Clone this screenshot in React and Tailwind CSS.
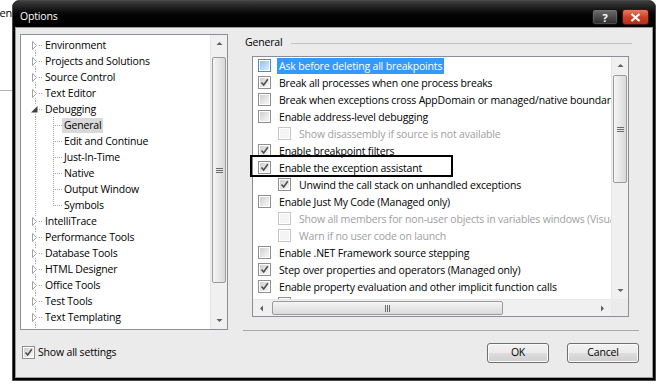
import React from "react";

const treeItems = [
  { t: "Environment", first: true },
  { t: "Projects and Solutions" },
  { t: "Source Control" },
  { t: "Text Editor" },
  { t: "Debugging", open: true },
  { t: "General", child: true, sel: true },
  { t: "Edit and Continue", child: true },
  { t: "Just-In-Time", child: true },
  { t: "Native", child: true },
  { t: "Output Window", child: true },
  { t: "Symbols", child: true, last: true },
  { t: "IntelliTrace" },
  { t: "Performance Tools" },
  { t: "Database Tools" },
  { t: "HTML Designer" },
  { t: "Office Tools" },
  { t: "Test Tools" },
  { t: "Text Templating" },
  { t: "Windows Forms Designer" },
];

const rows = [
  { t: "Ask before deleting all breakpoints", sel: true },
  { t: "Break all processes when one process breaks", c: true },
  { t: "Break when exceptions cross AppDomain or managed/native boundaries" },
  { t: "Enable address-level debugging" },
  { t: "Show disassembly if source is not available", sub: true, dis: true },
  { t: "Enable breakpoint filters", c: true },
  { t: "Enable the exception assistant", c: true },
  { t: "Unwind the call stack on unhandled exceptions", c: true, sub: true },
  { t: "Enable Just My Code (Managed only)" },
  { t: "Show all members for non-user objects in variables windows (Visual Basic only)", sub: true, dis: true },
  { t: "Warn if no user code on launch", sub: true, dis: true },
  { t: "Enable .NET Framework source stepping" },
  { t: "Step over properties and operators (Managed only)", c: true },
  { t: "Enable property evaluation and other implicit function calls", c: true },
  { t: "Call string-conversion function on objects in variables windows", c: true, sub: true },
];

const dot = { stroke: "#a5a5a5", strokeDasharray: "1 1", shapeRendering: "crispEdges" };

function Gutter({ item }) {
  if (item.child) {
    return (
      <svg width="41" height="16" className="shrink-0">
        <line x1="14.5" y1="0" x2="14.5" y2="16" {...dot} />
        <line x1="32.5" y1="0" x2="32.5" y2={item.last ? 9 : 16} {...dot} />
        <line x1="34" y1="8.5" x2="41" y2="8.5" {...dot} />
      </svg>
    );
  }
  return (
    <svg width="22" height="16" className="shrink-0">
      {!item.first && <line x1="14.5" y1="0" x2="14.5" y2="3" {...dot} />}
      <line x1="14.5" y1="13" x2="14.5" y2="16" {...dot} />
      <line x1="18" y1="8.5" x2="22" y2="8.5" {...dot} />
      {item.open ? (
        <polygon points="16.5,5 16.5,11.5 10,11.5" fill="#3f3f3f" />
      ) : (
        <polygon points="11.5,4.5 15.5,8.5 11.5,12.5" fill="#fff" stroke="#a2a2a2" strokeWidth="1" />
      )}
    </svg>
  );
}

function Check({ checked, disabled, hot }) {
  const outer = disabled
    ? "border-[#c6c6c6]"
    : hot
    ? "border-[#4a8ac9]"
    : "border-[#8e8f8f]";
  const inner = disabled
    ? "bg-[#f4f4f4]"
    : hot
    ? "bg-gradient-to-br from-[#93c1ec] to-[#d9ecfb]"
    : "bg-gradient-to-br from-[#cfcfcf] to-[#f8f8f8]";
  return (
    <span className={`w-[13px] h-[13px] shrink-0 border bg-white p-px flex ${outer}`}>
      <span className={`flex-1 flex items-center justify-center ${inner}`}>
        {checked && (
          <svg width="9" height="9" viewBox="0 0 9 9">
            <path d="M1.5 4.5 L3.7 7 L7.8 1.3" stroke={disabled ? "#a0a0a0" : "#4b4b4b"} strokeWidth="1.5" fill="none" />
          </svg>
        )}
      </span>
    </span>
  );
}

function Arrow({ dir }) {
  const pts = {
    up: "0.5,4 3.5,1 6.5,4",
    down: "0.5,1 3.5,4 6.5,1",
    left: "4,0.5 1,3.5 4,6.5",
    right: "1,0.5 4,3.5 1,6.5",
  }[dir];
  const vert = dir === "up" || dir === "down";
  return (
    <svg width={vert ? 7 : 5} height={vert ? 5 : 7}>
      <polygon points={pts} fill="#5f5f5f" />
    </svg>
  );
}

function VScroll({ thumbTop, thumbH }) {
  return (
    <div className="w-[17px] shrink-0 flex flex-col bg-[#f0f0f0] border-l border-[#e6e6e6]">
      <div className="h-[17px] flex items-center justify-center">
        <Arrow dir="up" />
      </div>
      <div style={{ height: thumbTop - 17 }} />
      <div
        className="mx-px rounded-[2px] border border-[#9b9b9b] bg-gradient-to-r from-[#f5f5f5] to-[#d9d9d9] flex items-center justify-center"
        style={{ height: thumbH }}
      >
        <svg width="7" height="7">
          <path d="M0 1.5H7M0 3.5H7M0 5.5H7" stroke="#6b6b6b" strokeWidth="1" />
        </svg>
      </div>
      <div className="flex-1" />
      <div className="h-[17px] flex items-center justify-center">
        <Arrow dir="down" />
      </div>
    </div>
  );
}

function HScroll({ thumbLeft, thumbW }) {
  return (
    <div className="flex-1 h-[17px] flex bg-[#f0f0f0] border-t border-[#e6e6e6]">
      <div className="w-[17px] flex items-center justify-center">
        <Arrow dir="left" />
      </div>
      <div style={{ width: thumbLeft - 17 }} />
      <div
        className="my-px rounded-[2px] border border-[#9b9b9b] bg-gradient-to-b from-[#f5f5f5] to-[#d9d9d9] flex items-center justify-center"
        style={{ width: thumbW }}
      >
        <svg width="7" height="7">
          <path d="M1.5 0V7M3.5 0V7M5.5 0V7" stroke="#6b6b6b" strokeWidth="1" />
        </svg>
      </div>
      <div className="flex-1" />
      <div className="w-[17px] flex items-center justify-center">
        <Arrow dir="right" />
      </div>
    </div>
  );
}

function Button({ children, w }) {
  return (
    <button
      className={`${w} h-[20px] rounded-[3px] border border-[#707070] bg-[linear-gradient(#f2f2f2,#ebebeb_50%,#dddddd_50%,#cfcfcf)] shadow-[inset_0_0_0_1px_#fbfbfb] text-black flex items-center justify-center`}
    >
      {children}
    </button>
  );
}

export default function App() {
  return (
    <div className="w-[658px] h-[389px] bg-white flex font-['Open_Sans',sans-serif] text-[10.5px] tracking-[-0.18px] text-black overflow-hidden">
      <div className="w-[12px] shrink-0 flex flex-col">
        <div className="h-[26px] flex justify-end items-center overflow-hidden text-[11px]">
          <span className="whitespace-nowrap">en</span>
        </div>
        <div className="mt-[64px] h-px bg-[#b4b4b4]" />
      </div>

      <div className="w-[644px] h-[381px] shrink-0 flex flex-col rounded-t-[7px] bg-black border border-[#4a4a4a]">
        {/* title bar */}
        <div className="h-[26px] shrink-0 rounded-t-[6px] bg-gradient-to-b from-[#3e3e3e] via-[#060606] to-black flex items-start pl-[7px] pr-[6px]">
          <span className="mt-[8px] text-white">Options</span>
          <div className="ml-auto mt-[8px] flex gap-[4px]">
            <div className="w-[26px] h-[16px] rounded-[3px] border border-[#111] bg-gradient-to-b from-[#6e6e6e] to-[#2c2c2c] shadow-[inset_0_0_0_1px_#8a8a8a55] flex items-center justify-center text-[11px] font-bold text-white leading-none">
              ?
            </div>
            <div className="w-[27px] h-[16px] rounded-[3px] border border-[#4a1208] bg-gradient-to-b from-[#e67a63] via-[#cc4126] to-[#b3301a] flex items-center justify-center">
              <svg width="11" height="9" viewBox="0 0 11 9">
                <path d="M1.5 1 L9.5 8 M9.5 1 L1.5 8" stroke="#fff" strokeWidth="2.2" />
              </svg>
            </div>
          </div>
        </div>

        {/* body */}
        <div className="flex-1 mx-[2px] mb-[2px] border border-[#9a9a9a] bg-[#ebebeb] flex">
          {/* left column */}
          <div className="ml-[4px] pt-[6px] w-[208px] shrink-0 flex flex-col">
            <div className="h-[296px] border border-[#8a8f96] bg-white flex">
              <div className="flex-1 pt-[2px] overflow-hidden">
                {treeItems.map((item) => (
                  <div key={item.t} className="h-[16px] flex items-center">
                    <Gutter item={item} />
                    <span
                      className={`h-[15px] px-[2px] pt-[2px] flex items-center whitespace-nowrap ${item.sel ? "bg-[#d9d9d9]" : ""}`}
                    >
                      {item.t}
                    </span>
                  </div>
                ))}
              </div>
              <VScroll thumbTop={22} thumbH={226} />
            </div>
            <div className="mt-[15px] ml-[2px] flex items-center gap-[3px]">
              <Check checked />
              <span className="leading-[13px] pt-px">Show all settings</span>
            </div>
          </div>

          {/* right column */}
          <div className="pt-[6px] flex-1 flex flex-col">
            <div className="ml-[17px] mr-[20px] mt-[2px] h-[14px] flex items-center">
              <span>General</span>
              <div className="flex-1 ml-[9px] h-px bg-[#c2c2c2] mt-[1px]" />
            </div>

            <div className="relative ml-[24px] mt-[6px] w-[377px] h-[261px] border border-[#8a8f96] bg-white flex flex-col">
              <div className="flex-1 flex min-h-0">
                <div className="flex-1 overflow-hidden">
                  {rows.map((r) => (
                    <div key={r.t} className="h-[17px] flex items-center">
                      <span className={r.sub ? "ml-[25px]" : "ml-[5px]"}>
                        <Check checked={r.c} disabled={r.dis} hot={r.sel} />
                      </span>
                      <span
                        className={`ml-[6px] h-[16px] px-[2px] pt-[2px] flex items-center whitespace-nowrap ${r.sel ? "bg-[#3399ff] text-white" : r.dis ? "text-[#a0a0a0]" : ""}`}
                      >
                        {r.t}
                      </span>
                    </div>
                  ))}
                </div>
                <VScroll thumbTop={18} thumbH={108} />
              </div>
              <div className="flex">
                <HScroll thumbLeft={19} thumbW={231} />
                <div className="w-[17px] h-[17px] bg-[#ebebeb]" />
              </div>
              {/* annotation box */}
              <div className="absolute left-[-3px] top-[98px] w-[203px] h-[22px] border-2 border-black" />
            </div>

            <div className="ml-[15px] mt-[13px] w-[396px] h-px bg-[#a9a9a9]" />

            <div className="mt-[12px] mr-[13px] flex justify-end gap-[18px]">
              <Button w="w-[62px]">OK</Button>
              <Button w="w-[72px]">Cancel</Button>
            </div>
          </div>
        </div>
      </div>
    </div>
  );
}
